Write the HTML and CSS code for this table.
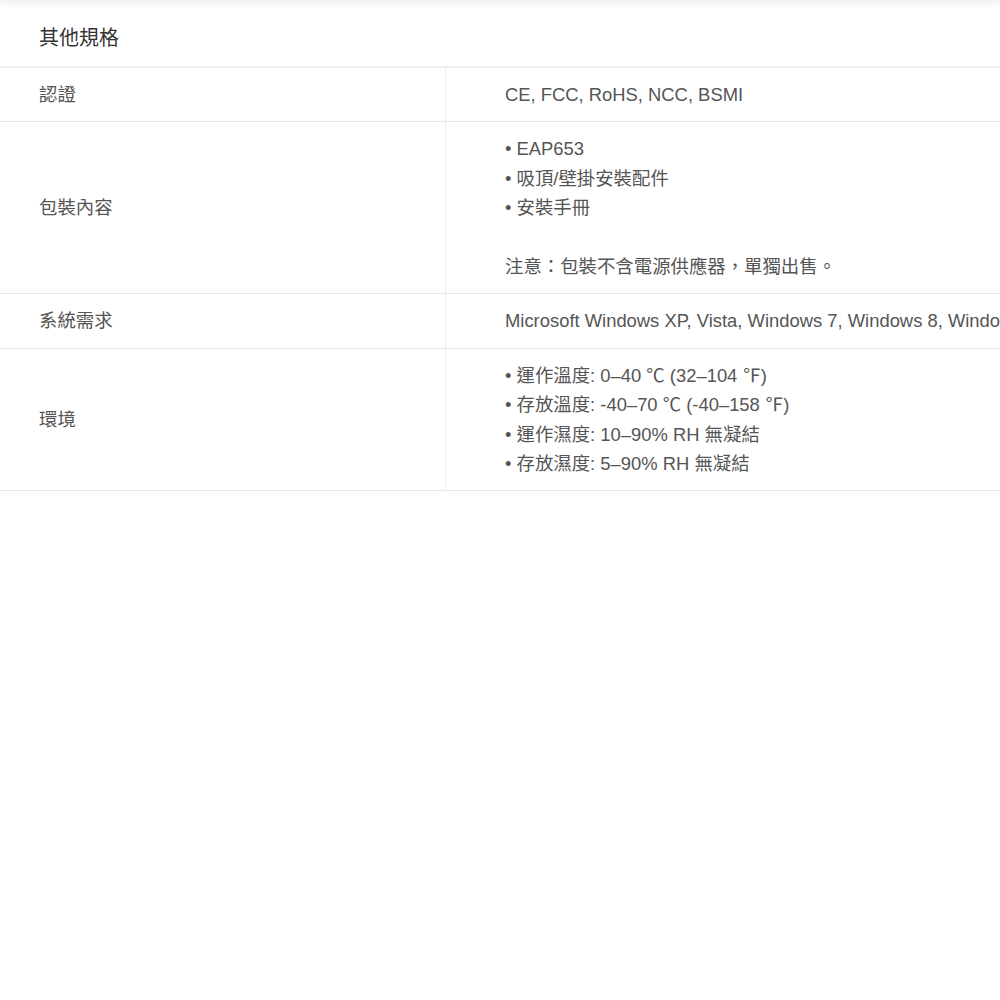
FILE: index.html
```html
<!DOCTYPE html>
<html lang="zh-Hant">

<head>
    <meta charset="UTF-8">
    <title>其他規格</title>
    <link rel="stylesheet" href="styles.css">
</head>

<body>
    <!-- Edge of the previous section -->
    <div class="top-edge"></div>

    <div class="spec-section">
        <h2 class="spec-title">其他規格</h2>

        <table class="spec-table">
            <tr>
                <td class="spec-label">認證</td>
                <td class="spec-value">CE, FCC, RoHS, NCC, BSMI</td>
            </tr>
            <tr>
                <td class="spec-label">包裝內容</td>
                <td class="spec-value">
                    <div>• EAP653</div>
                    <div>• 吸頂/壁掛安裝配件</div>
                    <div>• 安裝手冊</div>
                    <div class="blank">&nbsp;</div>
                    <div>注意：包裝不含電源供應器，單獨出售。</div>
                </td>
            </tr>
            <tr>
                <td class="spec-label">系統需求</td>
                <td class="spec-value">Microsoft Windows XP, Vista, Windows 7, Windows 8, Windows 10, Linux</td>
            </tr>
            <tr>
                <td class="spec-label">環境</td>
                <td class="spec-value">
                    <div>• 運作溫度: 0–40 ℃ (32–104 ℉)</div>
                    <div>• 存放溫度: -40–70 ℃ (-40–158 ℉)</div>
                    <div>• 運作濕度: 10–90% RH 無凝結</div>
                    <div>• 存放濕度: 5–90% RH 無凝結</div>
                </td>
            </tr>
        </table>
    </div>
</body>

</html>
```

FILE: styles.css
```css
html,
body {
    margin: 0;
    background: #fff;
    overflow: hidden;
}

body {
    font-family: 'Liberation Sans', Arial, 'Noto Sans CJK TC', sans-serif;
    color: #555;
}

.top-edge {
    height: 4px;
    background: #f4f4f4;
    box-shadow: 0 1px 4px rgba(0, 0, 0, 0.04);
}

/* wider than the window: the long row runs past the right edge */
.spec-section {
    width: 1200px;
}

.spec-title {
    margin: 0;
    padding-top: 6px;
    height: 56px;
    line-height: 56px;
    padding-left: 39px;
    font-size: 20px;
    font-weight: normal;
    color: #333;
    border-bottom: 2px solid #eee;
}

.spec-table {
    width: 100%;
    border-collapse: collapse;
    font-size: 18.4px;
    line-height: 29.4px;
}

.spec-table tr {
    border-bottom: 1px solid #e8e8e8;
}

.spec-table td {
    padding: 12px 0;
    vertical-align: middle;
}

.spec-label {
    width: 406px;
    padding-left: 39px !important;
    border-right: 1px solid #eee;
}

.spec-value {
    padding-left: 59px !important;
    white-space: nowrap;
}
```
